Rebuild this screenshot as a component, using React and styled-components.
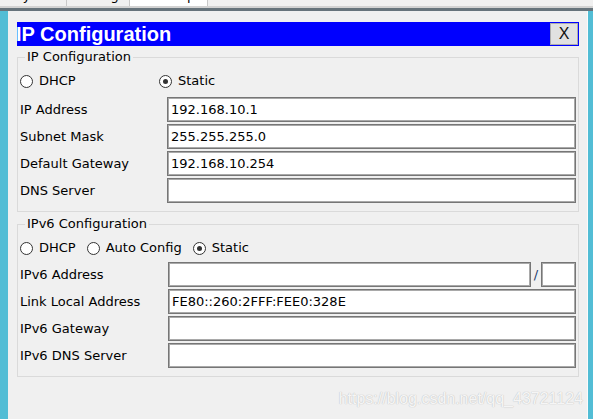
import styled, { createGlobalStyle } from 'styled-components';

const GlobalStyle = createGlobalStyle`
    html, body {
        margin: 0;
        padding: 0;
        background: #f0f0f0;
        overflow: hidden;
    }
`

const UI_FONT = `"DejaVu Sans", "Liberation Sans", sans-serif`

const Page = styled.div`
    position: relative;
    width: 593px;
    height: 419px;
    display: flex;
    flex-direction: column;
    font-family: ${UI_FONT};
    font-size: 13px;
    color: #000;
    overflow: hidden;
`
const TabStrip = styled.div`
    height: 6px;
    display: flex;
    background: #f0f0f0;
    overflow: hidden;
`
const Tab = styled.div`
    width: ${p => p.$w}px;
    flex: none;
    background: ${p => p.$active ? '#ffffff' : '#f0f0f0'};
    border-right: 1px solid #c9c9c9;
    box-sizing: border-box;
    display: flex;
    justify-content: center;
    overflow: hidden;
`
const TabLabel = styled.span`
    margin-top: -12px;
    line-height: 16px;
    font-size: 13px;
    white-space: nowrap;
`
const LightRule = styled.div`
    height: 2px;
    background: #d2d2d2;
`
const DarkRule = styled.div`
    height: 3px;
    background: #66737b;
`
const Workspace = styled.div`
    flex: 1;
    display: flex;
`
const Edge = styled.div`
    width: ${p => p.$w}px;
    flex: none;
    background: #52bdd5;
`
const Panel = styled.div`
    flex: 1;
    background: #f0f0f0;
    padding: 11px 8px 0 9px;
    border-right: 1px solid #fbfbfb;
`
const TitleBar = styled.div`
    height: 24px;
    background: #0000ff;
    display: flex;
    align-items: center;
    justify-content: space-between;
`
const Title = styled.div`
    font-family: "Liberation Sans", Arial, sans-serif;
    font-weight: bold;
    font-size: 20px;
    line-height: 24px;
    color: #fff;
    margin-left: -1px;
`
const CloseButton = styled.div`
    width: 28px;
    height: 22px;
    box-sizing: border-box;
    margin-right: 1px;
    background: #e1e1e1;
    border: 1px solid #adadad;
    display: flex;
    align-items: center;
    justify-content: center;
    font-family: "Liberation Sans", Arial, sans-serif;
    font-size: 16px;
    color: #111;
`
const Group = styled.fieldset`
    margin: ${p => p.$top}px 0 0 0;
    padding: 6px 2px 8px 2px;
    border: 1px solid #dadada;
    min-width: 0;
`
const Legend = styled.legend`
    margin-left: 5px;
    padding: 0 2px;
    line-height: 16px;
    font-size: 13px;
`
const RadioRow = styled.div`
    height: 20px;
    display: flex;
    align-items: center;
    gap: ${p => p.$gap || 0}px;
`
const RadioItem = styled.div`
    display: flex;
    align-items: center;
    width: ${p => p.$w ? `${p.$w}px` : 'auto'};
`
const RadioCircle = styled.span`
    width: 13px;
    height: 13px;
    box-sizing: border-box;
    border-radius: 50%;
    border: 1px solid #333;
    background: #fff;
    display: flex;
    align-items: center;
    justify-content: center;
    &::after {
        content: '';
        width: 5px;
        height: 5px;
        border-radius: 50%;
        background: ${p => p.$checked ? '#333' : 'transparent'};
    }
`
const RadioText = styled.span`
    margin-left: 6px;
    line-height: 16px;
`
const FieldGrid = styled.div`
    margin-top: ${p => p.$top}px;
    display: grid;
    grid-template-columns: ${p => p.$label}px 1fr;
    grid-auto-rows: 25px;
    row-gap: 2px;
`
const FieldLabel = styled.div`
    display: flex;
    align-items: center;
    white-space: nowrap;
`
const TextBox = styled.input`
    box-sizing: border-box;
    width: ${p => p.$w ? `${p.$w}px` : '100%'};
    flex: ${p => p.$w ? 'none' : 1};
    min-width: 0;
    height: 25px;
    margin: 0;
    padding: 0 0 0 3px;
    border: 1px solid #767676;
    box-shadow: inset 0 0 0 1px #a9a9a9;
    background: #fff;
    font-family: ${UI_FONT};
    font-size: 13px;
    color: #000;
    outline: none;
`
const SplitField = styled.div`
    display: flex;
    align-items: center;
`
const Slash = styled.span`
    width: 10px;
    text-align: center;
    color: #1a3a6a;
`
const Watermark = styled.div`
    position: absolute;
    right: 10px;
    top: 390px;
    font-family: "Liberation Sans", Arial, sans-serif;
    font-size: 16px;
    color: rgba(255, 255, 255, 0.85);
    text-shadow: 0 0 1px #c4c4c4, 0 0 1px #c4c4c4;
    pointer-events: none;
`

const Radio = ({ label, checked, w }) => (
    <RadioItem $w={w}>
        <RadioCircle $checked={checked} />
        <RadioText>{label}</RadioText>
    </RadioItem>
)

const Field = ({ label, value }) => (
    <>
        <FieldLabel>{label}</FieldLabel>
        <TextBox readOnly value={value || ''} />
    </>
)

const App = () => {
    const v4 = [
        { label: 'IP Address', value: '192.168.10.1' },
        { label: 'Subnet Mask', value: '255.255.255.0' },
        { label: 'Default Gateway', value: '192.168.10.254' },
        { label: 'DNS Server', value: '' },
    ]

    return (
        <Page>
            <GlobalStyle />
            <TabStrip>
                <Tab $w={67}><TabLabel>Physical</TabLabel></Tab>
                <Tab $w={63}><TabLabel>Config</TabLabel></Tab>
                <Tab $w={78} $active><TabLabel>Desktop</TabLabel></Tab>
            </TabStrip>
            <LightRule />
            <DarkRule />
            <Workspace>
                <Edge $w={8} />
                <Panel>
                    <TitleBar>
                        <Title>IP Configuration</Title>
                        <CloseButton>X</CloseButton>
                    </TitleBar>

                    <Group $top={3}>
                        <Legend>IP Configuration</Legend>
                        <RadioRow>
                            <Radio label='DHCP' w={139} />
                            <Radio label='Static' checked />
                        </RadioRow>
                        <FieldGrid $top={6} $label={147}>
                            {v4.map(f => <Field key={f.label} {...f} />)}
                        </FieldGrid>
                    </Group>

                    <Group $top={4}>
                        <Legend>IPv6 Configuration</Legend>
                        <RadioRow $gap={11}>
                            <Radio label='DHCP' />
                            <Radio label='Auto Config' />
                            <Radio label='Static' checked />
                        </RadioRow>
                        <FieldGrid $top={4} $label={148}>
                            <FieldLabel>IPv6 Address</FieldLabel>
                            <SplitField>
                                <TextBox readOnly value='' />
                                <Slash>/</Slash>
                                <TextBox readOnly value='' $w={35} />
                            </SplitField>
                            <Field label='Link Local Address' value='FE80::260:2FFF:FEE0:328E' />
                            <Field label='IPv6 Gateway' />
                            <Field label='IPv6 DNS Server' />
                        </FieldGrid>
                    </Group>
                </Panel>
                <Edge $w={5} />
            </Workspace>
            <Watermark>https://blog.csdn.net/qq_43721124</Watermark>
        </Page>
    )
}

export default App;
